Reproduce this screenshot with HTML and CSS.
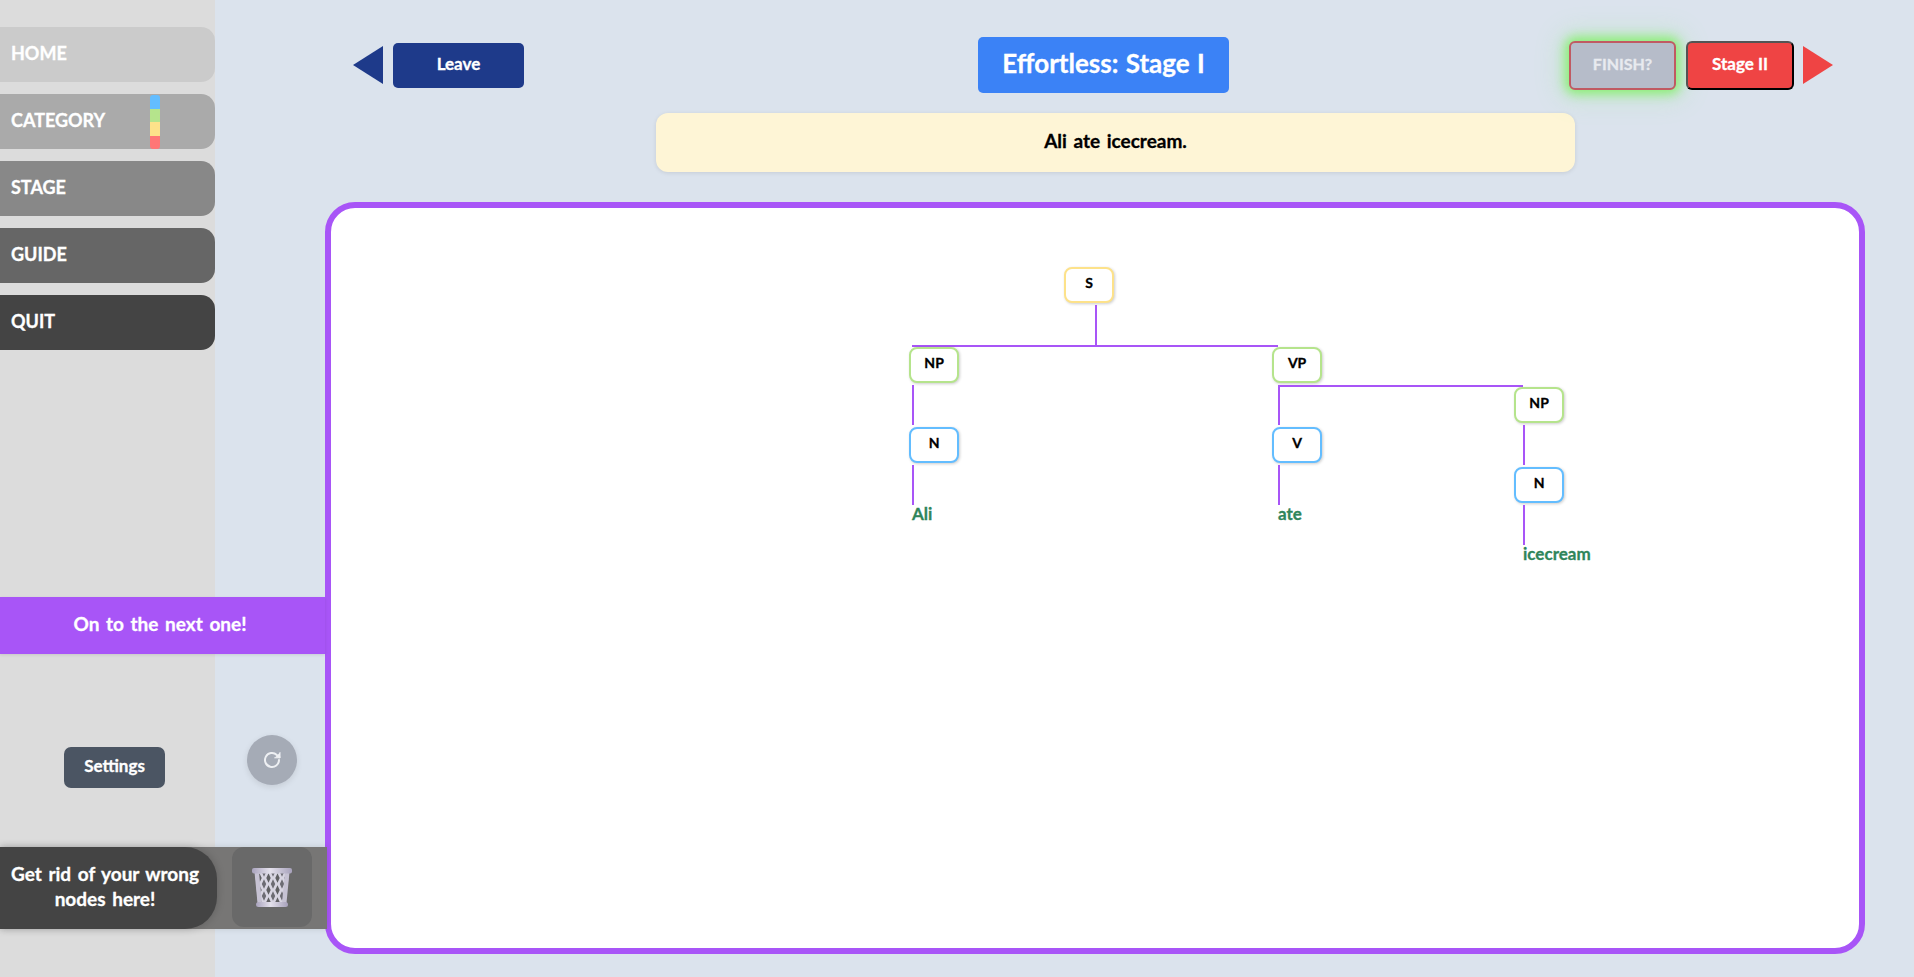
FILE: index.html
```html
<!DOCTYPE html>
<html lang="en">
<head>
<meta charset="utf-8">
<title>Effortless: Stage I</title>
<link rel="stylesheet" href="styles.css">
</head>
<body>
<div class="page">
  <aside class="left">
    <nav class="nav">
      <a class="nav-item nav-home">HOME</a>
      <a class="nav-item nav-category">CATEGORY
        <span class="stripes"><i class="s-blue"></i><i class="s-green"></i><i class="s-yellow"></i><i class="s-red"></i></span>
      </a>
      <a class="nav-item nav-stage">STAGE</a>
      <a class="nav-item nav-guide">GUIDE</a>
      <a class="nav-item nav-quit">QUIT</a>
    </nav>
    <div class="banner">On to the next one!</div>
    <div class="tools">
      <button class="settings">Settings</button>
      <button class="refresh" aria-label="Reset">
        <svg viewBox="0 0 24 24" width="24" height="24" fill="none" stroke="#eef0f3" stroke-width="2" stroke-linecap="round" stroke-linejoin="round"><path d="M19 12a7 7 0 1 1-2.200-5.100L19.500 9.300"/><path d="M20 4.500V9.800h-5.300" fill="#eef0f3" stroke-width="1"/></svg>
      </button>
    </div>
    <div class="trash-bar">
      <div class="trash-text">Get rid of your wrong nodes here!</div>
      <div class="trash-box">
        <svg viewBox="0 0 40 40" width="40" height="40">
          <defs>
            <linearGradient id="rim" x1="0" x2="1" y1="0" y2="0"><stop offset="0" stop-color="#a9a3bd"/><stop offset=".45" stop-color="#e4e1ec"/><stop offset="1" stop-color="#a7a1bb"/></linearGradient>
            <pattern id="lat" x="3" y="5" width="9" height="12" patternUnits="userSpaceOnUse">
              <rect width="9" height="12" fill="#d8d5e2"/>
              <path d="M4.500 1.200L6.700 6 4.500 10.800 2.300 6Z" fill="#5f5f62"/>
              <path d="M0 -4.800L2.200 0 0 4.800-2.200 0ZM9 -4.800L11.200 0 9 4.800 6.800 0ZM0 7.200L2.200 12 0 16.800-2.200 12ZM9 7.200L11.200 12 9 16.800 6.800 12Z" fill="#6d6c74"/>
            </pattern>
          </defs>
          <path d="M3 5h34l-3 31H6Z" fill="url(#lat)"/>
          <path d="M2.500 5h4.500l3 31H5.500ZM37.500 5H33l-3 31h4.500Z" fill="#c6c2d3"/>
          <rect x="0" y="1" width="40" height="5.500" rx="2" fill="url(#rim)"/>
          <rect x="4" y="35" width="32" height="5" rx="2.500" fill="url(#rim)"/>
        </svg>
      </div>
    </div>
  </aside>
  <main class="main">
    <header class="top">
      <div class="top-left">
        <span class="tri tri-left"></span>
        <button class="leave">Leave</button>
      </div>
      <h1 class="title">Effortless: Stage I</h1>
      <div class="top-right">
        <button class="finish">FINISH?</button>
        <button class="next">Stage II</button>
        <span class="tri tri-right"></span>
      </div>
    </header>
    <div class="sentence">Ali ate icecream.</div>
    <section class="board">
      <div class="canvas">
        <div class="node yellow n-s">S</div>
        <div class="line v l-s"></div>
        <div class="line h l-sh"></div>
        <div class="node green n-np1">NP</div>
        <div class="node green n-vp">VP</div>
        <div class="line v l-np1"></div>
        <div class="node blue n-n1">N</div>
        <div class="line v l-n1"></div>
        <div class="word w-ali">Ali</div>
        <div class="line h l-vph"></div>
        <div class="line v l-vp"></div>
        <div class="node blue n-v">V</div>
        <div class="line v l-v"></div>
        <div class="word w-ate">ate</div>
        <div class="node green n-np2">NP</div>
        <div class="line v l-np2"></div>
        <div class="node blue n-n2">N</div>
        <div class="line v l-n2"></div>
        <div class="word w-ice">icecream</div>
      </div>
    </section>
  </main>
</div>
</body>
</html>
```
FILE: styles.css
```css
* { box-sizing: border-box; }
html, body { margin: 0; height: 100%; overflow: hidden; }
body {
  background: #dbe3ed;
  font-family: Lato, "Noto Sans", sans-serif;
  font-weight: 700;
  color: #fff;
  -webkit-text-stroke: .3px currentColor;
}
button { font: inherit; color: inherit; padding: 0; }
.page { display: flex; height: 977px; }

.left {
  position: relative;
  z-index: 2;
  width: 325px;
  flex: none;
  display: flex;
  flex-direction: column;
  background: linear-gradient(to right, #dcdcdc 215px, transparent 215px);
  padding-top: 27px;
}
.nav { width: 215px; display: flex; flex-direction: column; gap: 12px; }
.nav-item {
  position: relative;
  height: 55px;
  display: flex;
  align-items: center;
  padding: 0 0 3px 11px;
  border-radius: 0 14px 14px 0;
  font-size: 18px;
}
.nav-home { background: #cbcbcb; }
.nav-category { background: #aaaaaa; }
.nav-stage { background: #888888; }
.nav-guide { background: #666666; }
.nav-quit { background: #444444; }
.stripes {
  position: absolute;
  left: 150px;
  top: 1px;
  bottom: 0;
  width: 10px;
  display: flex;
  flex-direction: column;
  border-radius: 3px;
  overflow: hidden;
}
.stripes i { flex: 1; }
.s-blue { background: #63bdff; }
.s-green { background: #b5e48c; }
.s-yellow { background: #fde28a; }
.s-red { background: #ff7676; }

.banner {
  margin-top: 247px;
  height: 57px;
  display: flex;
  align-items: center;
  justify-content: center;
  background: #a855f7;
  font-size: 19px;
  padding: 0 5px 4px 0;
  word-spacing: 2px;
  box-shadow: 0 1px 3px rgba(0, 0, 0, .1);
}
.tools { position: relative; height: 193px; }
.settings {
  position: absolute;
  left: 64px;
  top: 93px;
  width: 101px;
  height: 41px;
  border: 0;
  border-radius: 7px;
  background: #4b5563;
  font-size: 17px;
  padding-bottom: 5px;
}
.refresh {
  position: absolute;
  left: 247px;
  top: 81px;
  width: 50px;
  height: 50px;
  border: 0;
  border-radius: 50%;
  background: #a5abb6;
  display: flex;
  align-items: center;
  justify-content: center;
  box-shadow: 0 2px 6px rgba(0, 0, 0, .1);
}
.trash-bar {
  width: 327px;
  height: 82px;
  display: flex;
  background: #777675;
  box-shadow: 0 0 6px rgba(0, 0, 0, .12);
}
.trash-text {
  width: 217px;
  flex: none;
  padding: 0 7px 5px 0;
  display: flex;
  align-items: center;
  text-align: center;
  background: #444444;
  border-radius: 0 32px 32px 0;
  font-size: 19px;
  line-height: 25px;
  word-spacing: 2px;
  box-shadow: 0 0 8px rgba(0, 0, 0, .2);
}
.trash-box {
  margin-left: 15px;
  width: 80px;
  height: 80px;
  display: flex;
  align-items: center;
  justify-content: center;
  background: #696969;
  border-radius: 12px;
}

.main { flex: 1; min-width: 0; position: relative; }
.top { display: flex; align-items: flex-start; padding: 37px 0 0 28px; height: 113px; }
.top-left { display: flex; align-items: center; gap: 10px; margin-top: 6px; }
.tri { display: block; width: 0; height: 0; border-style: solid; border-color: transparent; }
.tri-left { border-width: 19px 30px 19px 0; border-right-color: #1e3a8a; margin-top: -1px; }
.tri-right { border-width: 19px 0 19px 30px; border-left-color: #ef4444; margin: -1px 0 0 -1px; }
.leave {
  width: 131px;
  height: 45px;
  border: 0;
  border-radius: 5px;
  background: #1e3a8a;
  font-size: 17px;
  padding-bottom: 5px;
}
.title {
  margin: 0 0 0 454px;
  width: 251px;
  height: 56px;
  display: flex;
  align-items: center;
  justify-content: center;
  background: #3b82f6;
  border-radius: 5px;
  font-size: 26px;
  font-weight: 700;
  word-spacing: 1px;
  padding-bottom: 4px;
}
.top-right { display: flex; align-items: center; margin: 4px 0 0 340px; gap: 10px; }
.finish {
  width: 107px;
  height: 49px;
  border: 2px solid #c05a62;
  border-radius: 6px;
  background: #b6bcc9;
  color: #e8eaef;
  font-size: 16px;
  padding-bottom: 5px;
  box-shadow: 0 0 11px 4px rgba(134, 239, 110, .95), 0 0 26px 10px rgba(134, 239, 126, .2);
}
.next {
  width: 108px;
  height: 49px;
  border: 2px outset #000;
  border-radius: 6px;
  background: #ef4444;
  font-size: 17px;
  padding-bottom: 5px;
}
.sentence {
  margin-left: 331px;
  width: 919px;
  height: 59px;
  display: flex;
  align-items: center;
  justify-content: center;
  background: #fef5d6;
  border-radius: 12px;
  color: #000;
  font-size: 19px;
  word-spacing: 2px;
  padding-bottom: 5px;
  box-shadow: 0 1px 4px rgba(0, 0, 0, .1);
}
.board {
  margin-top: 30px;
  width: 1540px;
  height: 752px;
  background: #fff;
  border: 6px solid #a855f7;
  border-radius: 30px;
}
.canvas { position: relative; width: 100%; height: 100%; }

/* Canvas coordinates: page position minus (331, 208) */
.node {
  position: absolute;
  width: 49.600px;
  height: 35.500px;
  display: flex;
  align-items: center;
  justify-content: center;
  padding-bottom: 6px;
  background: #fff;
  border: 2px solid;
  border-radius: 8px;
  color: #000;
  font-size: 14px;
  box-shadow: 1px 1px 3px rgba(0, 0, 0, .2);
}
.yellow { border-color: #fde28a; }
.green { border-color: #b5e48c; }
.blue { border-color: #63bdff; }
.n-s { left: 733.300px; top: 59.300px; }
.n-np1 { left: 578.300px; top: 139.300px; }
.n-vp { left: 941.300px; top: 139.300px; }
.n-n1 { left: 578.300px; top: 219.300px; }
.n-v { left: 941.300px; top: 219.300px; }
.n-np2 { left: 1183.300px; top: 179.300px; }
.n-n2 { left: 1183.300px; top: 259.300px; }

.line { position: absolute; background: #a855f7; }
.line.v { width: 2px; height: 40px; }
.line.h { height: 2px; }
.l-s { left: 764px; top: 97px; }
.l-sh { left: 581px; top: 137px; width: 366px; }
.l-np1 { left: 581px; top: 177px; }
.l-n1 { left: 581px; top: 257px; }
.l-vph { left: 947px; top: 177px; width: 245px; }
.l-vp { left: 947px; top: 177px; }
.l-v { left: 947px; top: 257px; }
.l-np2 { left: 1192px; top: 217px; }
.l-n2 { left: 1192px; top: 297px; }

.word {
  position: absolute;
  color: #2f855a;
  font-size: 17px;
  line-height: 22px;
}
.w-ali { left: 581px; top: 295px; }
.w-ate { left: 947px; top: 295px; }
.w-ice { left: 1192px; top: 335px; }
```
